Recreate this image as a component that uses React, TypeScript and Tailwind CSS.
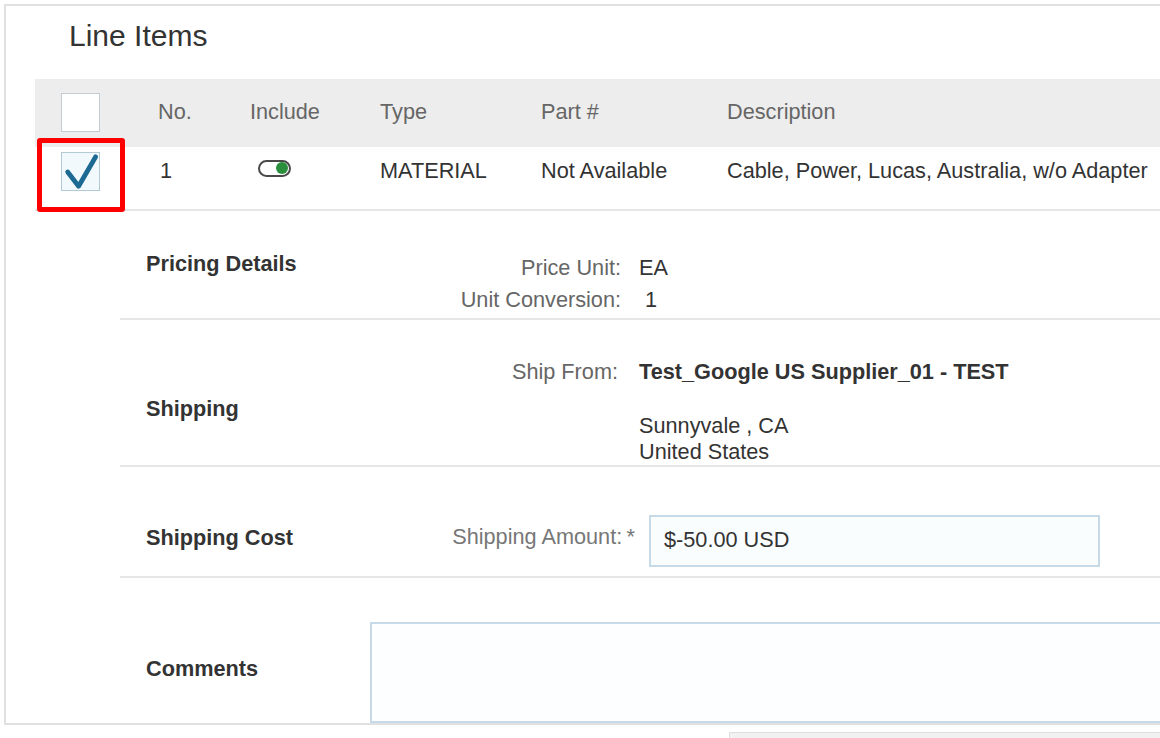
import React from 'react'

const font = { fontFamily: '"Liberation Sans", Arial, sans-serif' }

function CheckBox({ checked }: { checked?: boolean }) {
  return (
    <div
      className={`h-[39px] w-[39px] border ${
        checked ? 'border-[#b4c9d6] bg-[#f2f9fc]' : 'border-[#c3ccd3] bg-white'
      }`}
    >
      {checked && (
        <svg viewBox="0 0 39 39" className="h-full w-full">
          <path
            d="M6 20 L17.5 35 L35.5 4"
            fill="none"
            stroke="#1c6993"
            strokeWidth="5"
            strokeLinecap="round"
            strokeLinejoin="round"
          />
        </svg>
      )}
    </div>
  )
}

function Toggle() {
  return (
    <div className="ml-[8px] flex h-[17px] w-[33px] items-center justify-end rounded-full border-2 border-[#4a4a4a] bg-white pr-[1px]">
      <div className="h-[12px] w-[12px] rounded-full bg-[#2a8f3c]" />
    </div>
  )
}

export default function App() {
  return (
    <div className="h-[738px] w-[1160px] overflow-hidden bg-white text-[21.7px] text-[#333]" style={font}>
      <div className="ml-[4px] mt-[4px] w-[1200px] border-l-2 border-t-2 border-b-2 border-[#e0e0e0]">
        {/* Title */}
        <div className="flex h-[73px] items-center pl-[63px] pb-[14px]">
          <h1 className="text-[30px] font-normal text-[#333]">Line Items</h1>
        </div>

        {/* Table */}
        <div className="ml-[29px]">
          <div className="grid h-[68px] grid-cols-[123px_92px_130px_161px_186px_1fr] items-center bg-[#ededed] pb-[2px] text-[#666]">
            <div className="pl-[26px]">
              <CheckBox />
            </div>
            <div>No.</div>
            <div>Include</div>
            <div>Type</div>
            <div>Part #</div>
            <div>Description</div>
          </div>
          <div className="relative grid h-[64px] grid-cols-[123px_92px_130px_161px_186px_1fr] items-center border-b-2 border-[#e6e6e6] pb-[13px]">
            <div className="pl-[26px]">
              <CheckBox checked />
            </div>
            <div className="pl-[2px]">1</div>
            <div className="pb-[7px]">
              <Toggle />
            </div>
            <div>MATERIAL</div>
            <div>Not Available</div>
            <div className="whitespace-nowrap">Cable, Power, Lucas, Australia, w/o Adapter</div>
            <div className="absolute left-[2px] top-[-9px] h-[74px] w-[88px] rounded-[3px] border-[5px] border-[#ff0000]" />
          </div>
        </div>

        {/* Sections */}
        <div className="ml-[114px]">
          {/* Pricing Details */}
          <div className="flex h-[109px] border-b-2 border-[#e6e6e6]">
            <div className="w-[250px] pl-[26px] pt-[37px] font-bold leading-[32px]">Pricing Details</div>
            <div className="pt-[41px] leading-[32px]">
              <div className="flex">
                <div className="w-[251px] text-right text-[#666]">Price Unit:</div>
                <div className="pl-[18px]">EA</div>
              </div>
              <div className="flex">
                <div className="w-[251px] text-right text-[#666]">Unit Conversion:</div>
                <div className="pl-[24px]">1</div>
              </div>
            </div>
          </div>

          {/* Shipping */}
          <div className="flex h-[147px] border-b-2 border-[#e6e6e6]">
            <div className="w-[250px] pl-[26px] pt-[76px] font-bold leading-[26px]">Shipping</div>
            <div className="flex pt-[39px] leading-[26px]">
              <div className="w-[248px] text-right text-[#666]">Ship From:</div>
              <div className="pl-[21px]">
                <div className="font-bold">Test_Google US Supplier_01 - TEST</div>
                <div className="mt-[28px]">Sunnyvale , CA</div>
                <div>United States</div>
              </div>
            </div>
          </div>

          {/* Shipping Cost */}
          <div className="flex h-[111px] items-center border-b-2 border-[#e6e6e6] pt-[38px]">
            <div className="w-[250px] pl-[26px] pb-[4px] font-bold">Shipping Cost</div>
            <div className="flex items-center">
              <div className="w-[265px] pb-[6px] text-right text-[#777]">Shipping Amount:&thinsp;*</div>
              <div className="ml-[14px] flex h-[52px] w-[451px] items-center border-2 border-[#c6dbe7] bg-[#fafdfe] pl-[13px]">
                $-50.00 USD
              </div>
            </div>
          </div>

          {/* Comments */}
          <div className="flex h-[145px] pt-[44px]">
            <div className="w-[250px] pl-[26px] pt-[31px] font-bold">Comments</div>
            <div className="h-[101px] flex-1 border-2 border-[#c6dbe7] bg-[#fdfeff]" />
          </div>
        </div>
      </div>

      <div className="ml-[729px] mt-[7px] h-[12px] border-l border-t border-[#dedede] bg-[#f2f2f2]" />
    </div>
  )
}
